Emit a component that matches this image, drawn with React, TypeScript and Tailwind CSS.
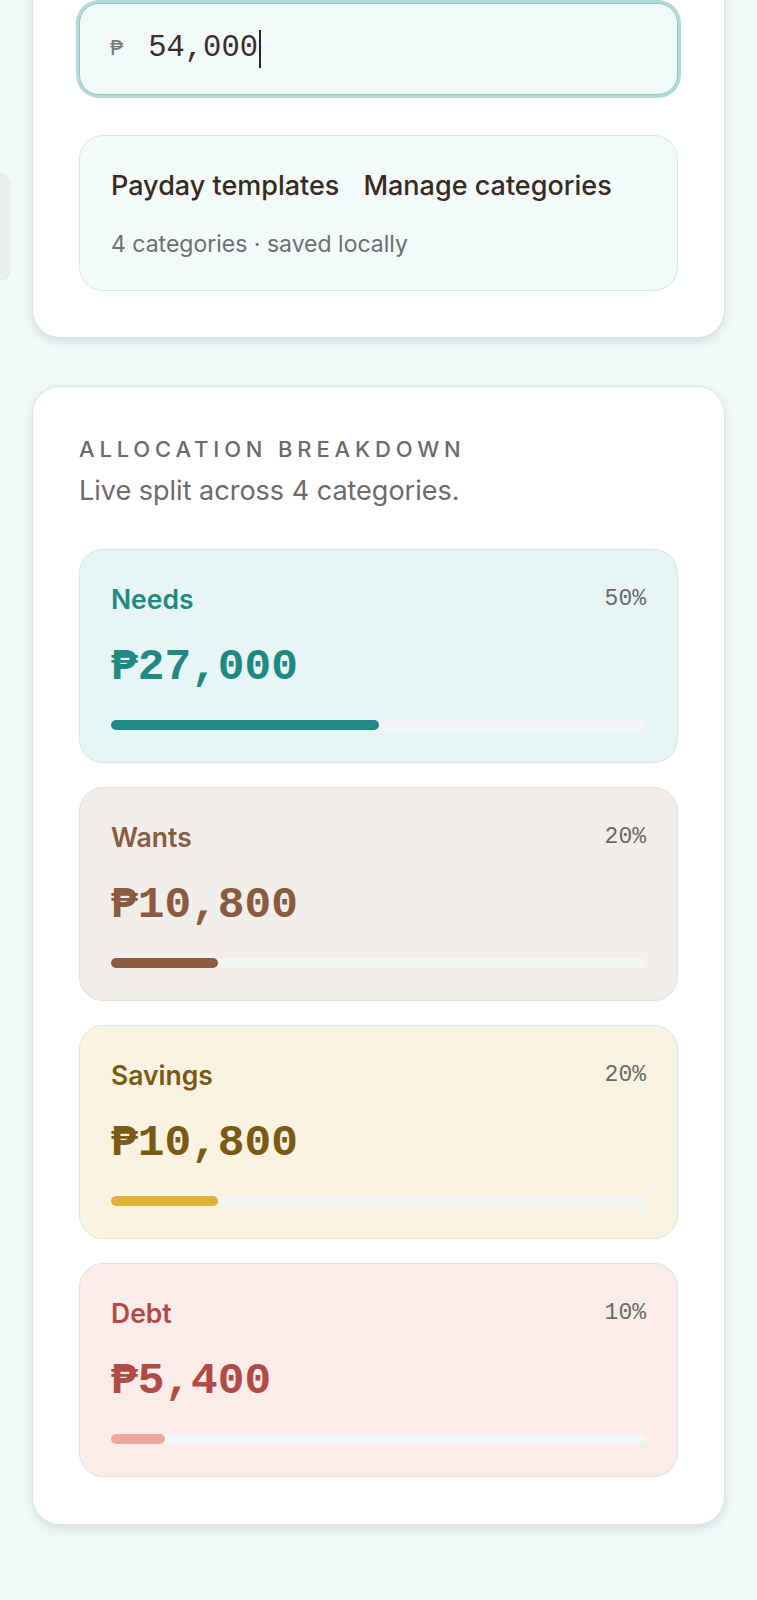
import React from "react";

const categories = [
  {
    name: "Needs",
    pct: 50,
    amount: "₱27,000",
    card: "bg-[#e7f6f5]",
    text: "text-[#1f8a83]",
    bar: "bg-[#1f8a84]",
  },
  {
    name: "Wants",
    pct: 20,
    amount: "₱10,800",
    card: "bg-[#f2eeeb]",
    text: "text-[#8b5a40]",
    bar: "bg-[#8b5a40]",
  },
  {
    name: "Savings",
    pct: 20,
    amount: "₱10,800",
    card: "bg-[#faf3e1]",
    text: "text-[#7a5a14]",
    bar: "bg-[#e2b13c]",
  },
  {
    name: "Debt",
    pct: 10,
    amount: "₱5,400",
    card: "bg-[#fbecea]",
    text: "text-[#b04b45]",
    bar: "bg-[#eea8a1]",
  },
];

const mono = "font-['Liberation_Mono',monospace]";

function CategoryCard({ c }: { c: (typeof categories)[number] }) {
  return (
    <div className={`rounded-[24px] border border-[#d5e8e7] px-[31px] pt-[33px] pb-[32px] ${c.card}`}>
      <div className="flex items-center justify-between">
        <span className={`text-[26.5px] font-semibold leading-8 ${c.text}`}>{c.name}</span>
        <span className={`${mono} text-[23px] leading-8 text-[#6b6b6b]`}>{c.pct}%</span>
      </div>
      <div className={`${mono} mt-[26px] text-[44.5px] font-bold leading-[52px] ${c.text}`}>{c.amount}</div>
      <div className="mt-[27px] h-[10px] w-full rounded-full bg-[#f1f5f3]">
        <div className={`h-full rounded-full ${c.bar}`} style={{ width: `${c.pct}%` }} />
      </div>
    </div>
  );
}

export default function App() {
  return (
    <div className="relative min-h-[1600px] overflow-hidden bg-[#f1f9f8] font-['Inter',sans-serif]">
      <div className="absolute left-0 top-[173px] h-[108px] w-[10px] rounded-r-[12px] border border-l-0 border-[#e2e6e6] bg-[#eef0f0]" />

      <div className="flex flex-col gap-12 px-8">
        <section className="-mt-[44px] rounded-[28px] border border-[#d6e8e7] bg-white p-[46px] shadow-[0_4px_10px_rgba(120,160,158,0.25)]">
          <div className="flex h-[92px] items-center gap-[25px] rounded-[20px] border border-[#8fc9c5] bg-[#f1f9f9] px-[30px] shadow-[0_0_0_3px_#b3dad7]">
            <span className={`${mono} text-[22px] text-[#7a7a7a]`}>₱</span>
            <span className={`${mono} flex items-center text-[30.5px] text-[#3b2f2a]`}>
              54,000
              <span className="ml-[1px] inline-block h-[38px] w-[2px] bg-[#2b2320]" />
            </span>
          </div>

          <div className="mt-10 rounded-[24px] border border-[#d5e9e8] bg-[#f2fafa] px-[31px] pt-[32px] pb-[30px]">
            <div className="flex gap-6">
              <button className="text-[27px] font-medium leading-9 text-[#3a2a20]">Payday templates</button>
              <button className="text-[27px] font-medium leading-9 text-[#3a2a20]">Manage categories</button>
            </div>
            <p className="mt-6 text-[23px] leading-8 text-[#6f6f6f]">4 categories · saved locally</p>
          </div>
        </section>

        <section className="rounded-[28px] border border-[#d6e8e7] bg-white px-[46px] pt-[47px] pb-[47px] shadow-[0_4px_10px_rgba(120,160,158,0.25)]">
          <h2 className="text-[22px] font-medium uppercase leading-[30px] tracking-[0.22em] text-[#6b6b6b]">
            Allocation breakdown
          </h2>
          <p className="mt-[9px] text-[27px] leading-9 text-[#6b6b6b]">Live split across 4 categories.</p>

          <div className="mt-10 flex flex-col gap-6">
            {categories.map((c) => (
              <CategoryCard key={c.name} c={c} />
            ))}
          </div>
        </section>
      </div>
    </div>
  );
}
